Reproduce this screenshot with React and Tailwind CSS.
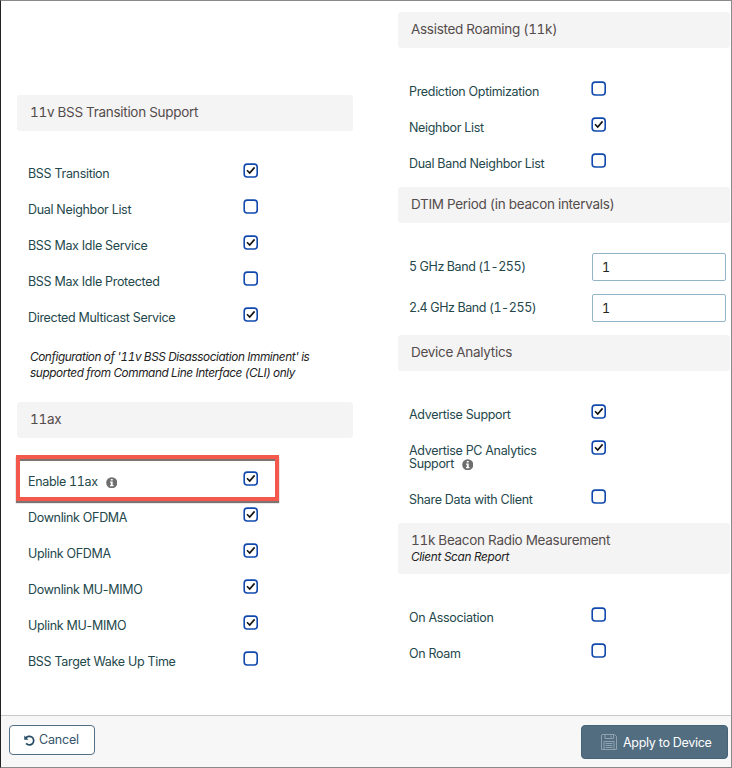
function Checkbox({ checked }) {
  return (
    <svg viewBox="0 0 15 15" className="block size-[15px] shrink-0" fill="none">
      <rect x="1.2" y="1.1" width="13" height="12.9" rx="3" stroke="#1149ad" strokeWidth="1.6" fill="#fff" />
      {checked && <path d="M4 7.3 6.7 10 11.6 4.4" stroke="#111" strokeWidth="1.6" />}
    </svg>
  );
}

function Info() {
  return (
    <svg viewBox="0 0 12 12" className="ml-2 inline-block size-[11.5px] align-[-2px]">
      <circle cx="6" cy="6" r="5.8" fill="#6e6e6e" />
      <path d="M5 2h2v1.7H5zM4.3 4.8H7v3.6h.8v1.3H4.2V8.4H5V6h-.7z" fill="#fff" />
    </svg>
  );
}

const labelText = "text-[12.5px] text-[#23474b]";

function Row({ label, checked, info, highlight, right, tall }) {
  return (
    <div className={`relative flex pl-[11px] ${tall ? "h-[49px]" : "h-9"}`}>
      <div
        className={`pt-[14px] leading-[13px] tracking-[-0.32px] ${labelText} ${highlight ? "tabular-nums" : ""} ${right ? "w-[182px] pr-8" : "w-[215px]"}`}
      >
        {label}
        {info && <Info />}
      </div>
      <div className="pt-[10px]">
        <Checkbox checked={checked} />
      </div>
      {highlight && (
        <div className="absolute -left-px -top-[6px] h-[46px] w-[263px] border-4 border-[#f4574b] shadow-[0_2px_1px_#7b7473,inset_0_2px_0_#7b7473]" />
      )}
    </div>
  );
}

const heading = "text-[13.5px] tracking-[-0.3px] text-[#544c4c] tabular-nums";

function Header({ children, className = "" }) {
  return (
    <div className={`flex h-9 items-center rounded-[3px] bg-[#f4f4f4] pb-px pl-[13px] ${heading} ${className}`}>
      {children}
    </div>
  );
}

function NumberRow({ label }) {
  return (
    <div className={`flex h-[41px] items-start pl-[11px] leading-[27px] tabular-nums ${labelText}`}>
      <div className="w-[183px] tracking-[-0.42px]">{label}</div>
      <div className="h-7 w-[134px] rounded-[2px] border border-[#93b4c6] bg-white pl-[9px] text-[#222]">1</div>
    </div>
  );
}

export default function App() {
  return (
    <div className="flex h-[768px] w-[732px] flex-col overflow-hidden border border-t-[#8a8a8a] border-r-[#8a8a8a] border-b-[#8a8a8a] border-l-[#222] bg-white font-['Inter',sans-serif] font-normal">
      <div className="flex h-[714px]">
        <div className="ml-4 w-[336px] pt-[94px]">
          <Header>11v BSS Transition Support</Header>
          <div className="mt-[22px]">
            <Row label="BSS Transition" checked />
            <Row label="Dual Neighbor List" />
            <Row label="BSS Max Idle Service" checked />
            <Row label="BSS Max Idle Protected" />
            <Row label="Directed Multicast Service" checked />
          </div>
          <p className="mt-[17px] h-[31px] pl-[13px] text-[11.8px] leading-[15.5px] tracking-[-0.41px] whitespace-nowrap text-[#222] italic tabular-nums">
            Configuration of '11v BSS Disassociation Imminent' is
            <br />
            supported from Command Line Interface (CLI) only
          </p>
          <Header className="mt-[21px]">11ax</Header>
          <div className="mt-[23px]">
            <Row label="Enable 11ax" checked info highlight />
            <Row label="Downlink OFDMA" checked />
            <Row label="Uplink OFDMA" checked />
            <Row label="Downlink MU-MIMO" checked />
            <Row label="Uplink MU-MIMO" checked />
            <Row label="BSS Target Wake Up Time" />
          </div>
        </div>
        <div className="ml-[45px] w-[332px] pt-[11px]">
          <Header>Assisted Roaming (11k)</Header>
          <div className="mt-[23px]">
            <Row right label="Prediction Optimization" />
            <Row right label="Neighbor List" checked />
            <Row right label="Dual Band Neighbor List" />
          </div>
          <Header className="mt-2">DTIM Period (in beacon intervals)</Header>
          <div className="mt-[30px]">
            <NumberRow label="5 GHz Band (1-255)" />
            <NumberRow label="2.4 GHz Band (1-255)" />
          </div>
          <Header>Device Analytics</Header>
          <div className="mt-[23px]">
            <Row right label="Advertise Support" checked />
            <Row right tall label="Advertise PC Analytics Support" checked info />
            <Row right label="Share Data with Client" />
          </div>
          <div className="mt-2 h-[51px] rounded-[3px] bg-[#f4f4f4] pt-2 pl-[13px]">
            <div className={`leading-[18px] ${heading}`}>11k Beacon Radio Measurement</div>
            <div className="text-[11.8px] leading-4 tracking-[-0.34px] text-[#222] italic">Client Scan Report</div>
          </div>
          <div className="mt-[23px]">
            <Row right label="On Association" />
            <Row right label="On Roam" />
          </div>
        </div>
      </div>
      <div className="flex flex-1 justify-between border-t border-[#c9c9c9] bg-[#f7f7f7] pr-[3px] pl-2">
        <button className="mt-[9px] flex h-[30px] w-[86px] items-center justify-center gap-1 rounded-[4px] border border-[#526f84] bg-white pr-px text-[12.5px] tracking-[-0.2px] text-[#35546b]">
          <svg viewBox="0 0 12 12" className="size-[11px]" fill="none" stroke="#294c66" strokeWidth="1.9">
            <path d="M1.8 3.8A4.7 4.7 0 1 1 2.3 9.2" />
            <path d="M.3.6v4.6h4.6z" fill="#294c66" stroke="none" />
          </svg>
          Cancel
        </button>
        <button className="mt-[9px] flex h-[34px] w-[147px] items-center gap-[6px] rounded-[4px] border border-[#456278] bg-[#526d80] pl-[19px] text-[12.5px] tracking-[-0.3px] text-white">
          <svg viewBox="0 0 16 16" className="size-4" fill="none" stroke="#8fa2b0" strokeWidth="1">
            <path d="M1 .5h12.5l2 2v13H.5V1z" />
            <path d="M4 .5v4h8.5v-4M10 1.5v2M3 15.5V7.5h10v8M4.5 9.5h7M4.5 11.5h7M4.5 13.5h7" />
          </svg>
          <span className="pt-[3px]">Apply to Device</span>
        </button>
      </div>
    </div>
  );
}
